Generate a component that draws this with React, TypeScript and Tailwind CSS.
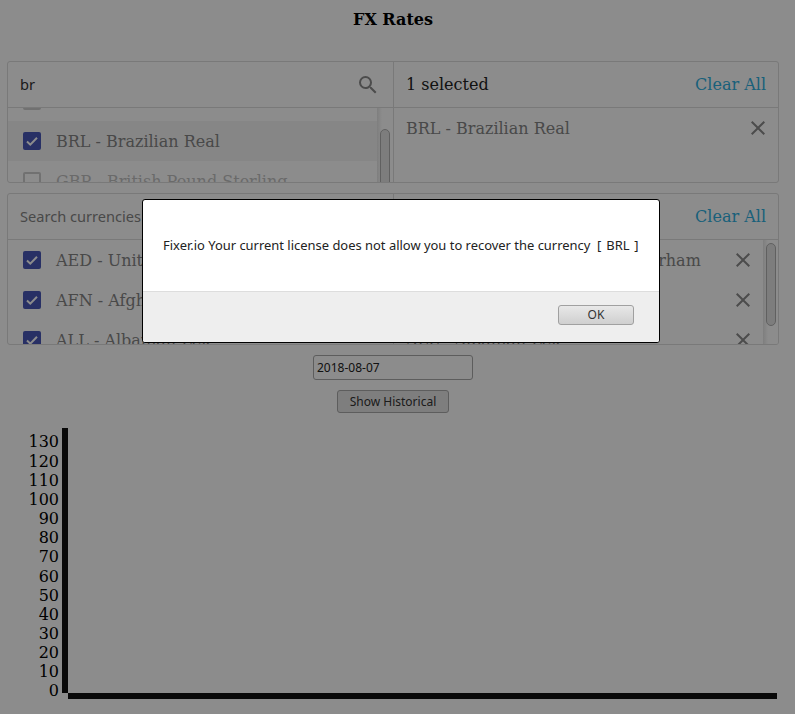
const serif = "font-['DejaVu_Serif',serif]";
const sans = "font-['Noto_Sans',sans-serif]";

function SearchIcon() {
  return (
    <svg width="24" height="24" viewBox="0 0 24 24" className="fill-[#8a8a8a]">
      <path d="M15.5 14h-.79l-.28-.27A6.471 6.471 0 0 0 16 9.5 6.5 6.5 0 1 0 9.5 16c1.61 0 3.09-.59 4.23-1.57l.27.28v.79l5 4.99L20.49 19l-4.99-5zm-6 0C7.01 14 5 11.99 5 9.5S7.01 5 9.5 5 14 7.01 14 9.5 11.99 14 9.5 14z" />
    </svg>
  );
}

function CloseIcon() {
  return (
    <svg width="24" height="24" viewBox="0 0 24 24" className="fill-[#8a8a8a] shrink-0">
      <path d="M19 6.41L17.59 5 12 10.59 6.41 5 5 6.41 10.59 12 5 17.59 6.41 19 12 13.41 17.59 19 19 17.59 13.41 12z" />
    </svg>
  );
}

function Checkbox({ checked }: { checked: boolean }) {
  return checked ? (
    <span className="w-[18px] h-[18px] rounded-[2px] bg-[#4a58b8] flex items-center justify-center shrink-0">
      <svg width="14" height="14" viewBox="0 0 14 14" fill="none" stroke="#fff" strokeWidth="2">
        <path d="M2 7.5l3.3 3.2L12 3.8" />
      </svg>
    </span>
  ) : (
    <span className="w-[18px] h-[18px] rounded-[2px] border-2 border-[#9e9e9e] shrink-0" />
  );
}

function Row({ label, checked, active, faded }: { label: string; checked: boolean; active?: boolean; faded?: boolean }) {
  return (
    <div className={`h-10 flex items-center pl-[15px] gap-[15px] whitespace-nowrap text-[#858585] ${active ? "bg-[#f5f5f5]" : ""} ${faded ? "opacity-50" : ""}`}>
      <Checkbox checked={checked} />
      <span className="pt-[2px]">{label}</span>
    </div>
  );
}

function RightRow({ label }: { label: string }) {
  return (
    <div className="h-10 flex items-center justify-between pl-3 pr-2 whitespace-nowrap text-[#858585]">
      <span className="pt-[2px]">{label}</span>
      <CloseIcon />
    </div>
  );
}

function ScrollBar({ top, height, width }: { top: string; height: string; width: string }) {
  return (
    <div className={`${width} shrink-0 pl-[3px] bg-gradient-to-r from-[#e6e6e6] to-white to-[5px]`}>
      <div className={`${top} ${height} w-[10px] rounded-[5px] bg-[#e4e4e4] border border-[#b0b0b0]`} />
    </div>
  );
}

const panel = "mx-[7px] border border-[#dcdcdc] rounded-[3px] grid grid-cols-[386px_1fr] overflow-hidden";
const ticks = [696, 677, 658, 639, 620, 601, 582, 562, 543, 524, 505, 486, 467, 447];

export default function App() {
  return (
    <div className={`relative w-[795px] h-[714px] overflow-hidden bg-white text-black text-base ${serif}`}>
      <div className="w-[786px]">
        <h1 className="h-[61px] pt-[10px] text-center font-bold text-base leading-5">FX Rates</h1>

        <div className={`${panel} h-[122px]`}>
          <div className="border-r border-[#dcdcdc] flex flex-col min-h-0">
            <div className="h-[46px] shrink-0 border-b border-[#dcdcdc] flex items-center justify-between pl-3 pr-[13px]">
              <span className={`${sans} text-[14.6px] text-[#333]`}>br</span>
              <SearchIcon />
            </div>
            <div className="flex flex-1 min-h-0 overflow-hidden">
              <div className="flex-1 min-w-0 overflow-hidden">
                <div className="-mt-[27px]">
                  <Row label="BOB - Bolivian Boliviano" checked={false} faded />
                  <Row label="BRL - Brazilian Real" checked active />
                  <Row label="GBP - British Pound Sterling" checked={false} faded />
                </div>
              </div>
              <ScrollBar width="w-[16px]" top="mt-[21px]" height="h-[120px]" />
            </div>
          </div>
          <div className="flex flex-col min-h-0">
            <div className="h-[46px] shrink-0 border-b border-[#dcdcdc] flex items-center justify-between pl-3 pr-3">
              <span className="text-[#222]">1 selected</span>
              <span className="text-[#2fb0e0]">Clear All</span>
            </div>
            <div className="h-10 flex items-center justify-between pl-3 pr-2 text-[#858585]">
              <span className="pt-[2px]">BRL - Brazilian Real</span>
              <CloseIcon />
            </div>
          </div>
        </div>

        <div className={`${panel} h-[152px] mt-[10px]`}>
          <div className="border-r border-[#dcdcdc] flex flex-col min-h-0">
            <div className="h-[46px] shrink-0 border-b border-[#dcdcdc] flex items-center pl-3">
              <span className={`${sans} text-[14.6px] text-[#858585]`}>Search currencies</span>
            </div>
            <div className="flex-1 min-h-0 overflow-hidden">
              <Row label="AED - United Arab Emirates Dirham" checked />
              <Row label="AFN - Afghan Afghani" checked />
              <Row label="ALL - Albanian Lek" checked />
            </div>
          </div>
          <div className="flex flex-col min-h-0">
            <div className="h-[46px] shrink-0 border-b border-[#dcdcdc] flex items-center justify-between pl-3 pr-3">
              <span className="text-[#222]">168 selected</span>
              <span className="text-[#2fb0e0]">Clear All</span>
            </div>
            <div className="flex flex-1 min-h-0 overflow-hidden">
              <div className="flex-1 min-w-0 overflow-hidden">
                <RightRow label="AED - United Arab Emirates Dirham" />
                <RightRow label="AFN - Afghan Afghani" />
                <RightRow label="ALL - Albanian Lek" />
              </div>
              <ScrollBar width="w-[15px]" top="mt-[3px]" height="h-[83px]" />
            </div>
          </div>
        </div>

        <div className="flex flex-col items-center mt-[10px]">
          <input
            readOnly
            value="2018-08-07"
            className={`${sans} w-[160px] h-[25px] px-[3px] text-xs text-[#222] bg-white border border-[#a9a9a9] rounded-[3px] outline-none`}
          />
          <button className={`${sans} mt-[10px] w-[112px] h-[23px] text-xs text-[#333] bg-[#e6e6e6] border border-[#a9a9a9] rounded-[3px]`}>
            Show Historical
          </button>
        </div>
      </div>

      <svg width="795" height="301" viewBox="0 413 795 301" className="block">
        <rect x="62" y="428" width="6" height="265" fill="#111" />
        <rect x="68" y="693" width="709" height="6" fill="#111" />
        {ticks.map((y, i) => (
          <text key={i} x="59" y={y} textAnchor="end" fontSize="16" fontFamily="'DejaVu Serif', serif" fill="#000">
            {i * 10}
          </text>
        ))}
      </svg>

      <div className="absolute inset-0 bg-black/45" />

      <div className={`absolute left-[142px] top-[199px] w-[518px] h-[144px] bg-white border border-black rounded-[3px] overflow-hidden flex flex-col ${sans}`}>
        <div className="h-[91px] shrink-0 flex items-center pl-5 text-[12.94px] text-[#222] whitespace-pre">
          Fixer.io Your current license does not allow you to recover the currency  <span className="[word-spacing:1.5px]">[ BRL ]</span>
        </div>
        <div className="flex-1 bg-[#eeeeee] border-t border-[#dddddd] flex justify-end items-start pt-[13px] pr-[25px]">
          <button className="w-[76px] h-5 text-xs text-[#333] rounded-[3px] border border-[#a0a0a0] bg-gradient-to-b from-[#e8e8e8] to-[#cfcfcf]">
            OK
          </button>
        </div>
      </div>
    </div>
  );
}
